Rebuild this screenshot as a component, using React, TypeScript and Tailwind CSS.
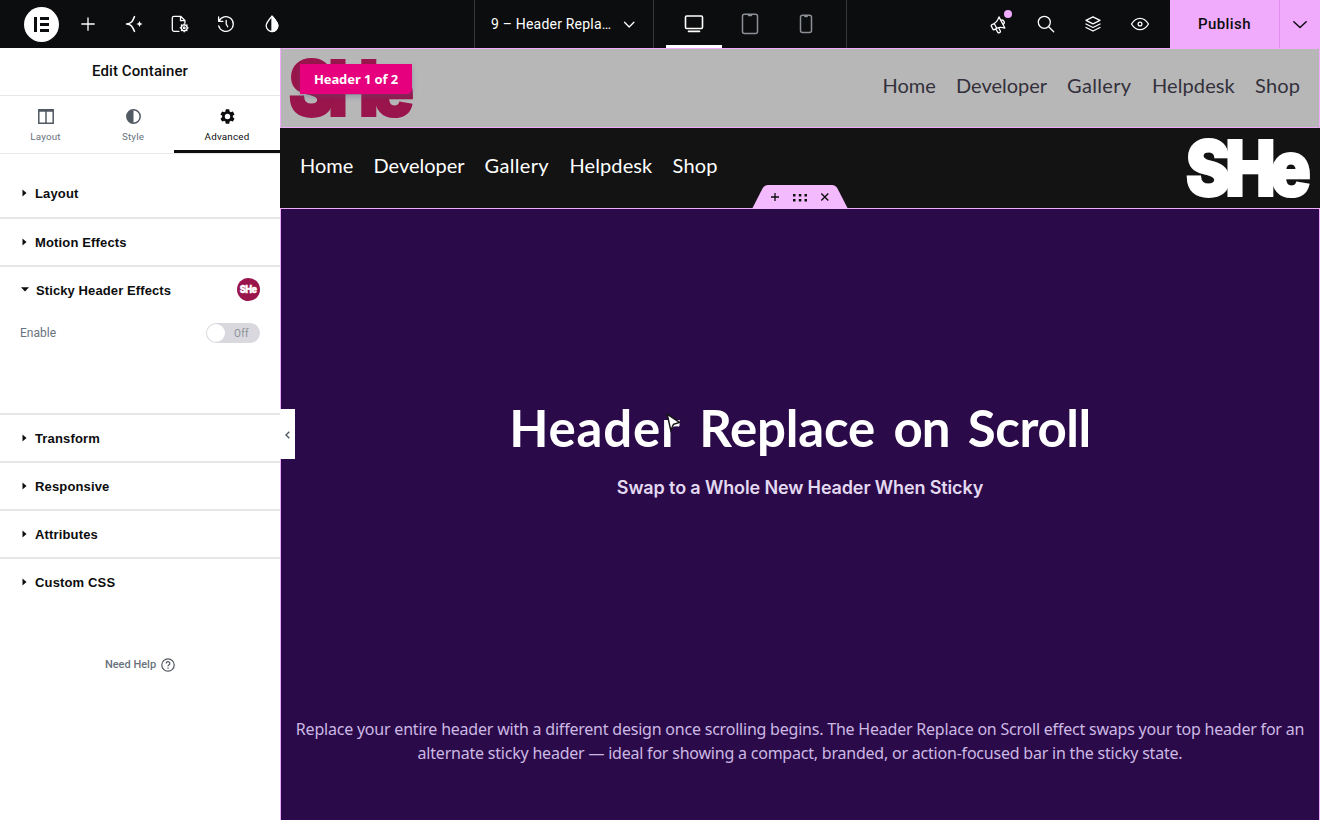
import type { ReactNode } from 'react';

function Icon({ children, size = 24, className = '' }: { children: ReactNode; size?: number; className?: string }) {
  return (
    <svg
      width={size}
      height={size}
      viewBox="0 0 24 24"
      fill="none"
      stroke="currentColor"
      strokeWidth={1.3}
      strokeLinecap="round"
      strokeLinejoin="round"
      className={className}
    >
      {children}
    </svg>
  );
}

function SheLogo({ className = '' }: { className?: string }) {
  return (
    <svg viewBox="0 0 124 62" className={`overflow-visible ${className}`} fill="currentColor" stroke="currentColor">
      <text
        x="-1.200"
        y="59"
        textLength="120"
        lengthAdjust="spacingAndGlyphs"
        fontFamily="Inter, sans-serif"
        fontWeight="900"
        fontSize="77"
        letterSpacing="-6"
        strokeWidth="2"
      >
        SHe
      </text>
    </svg>
  );
}

function TopBar() {
  return (
    <header className="flex h-12 w-full shrink-0 bg-[#0c0d0e] text-white">
      <div className="flex w-[474px] items-center pl-6">
        <div className="flex size-[35px] items-center justify-center rounded-full bg-white">
          <svg width="15" height="15" viewBox="0 0 15 15" fill="#0c0d0e">
            <path d="M0 0h3v15H0zM6 0h9v3H6zM6 6h9v3H6zM6 12h9v3H6z" />
          </svg>
        </div>
        <div className="ml-[6px] flex">
          <div className="flex w-[46px] justify-center">
            <Icon><path d="M12 5.8v12.400M5.800 12h12.400" /></Icon>
          </div>
          <div className="flex w-[46px] justify-center">
            <Icon>
              <path d="M4.500 12c4.800 0 6-2.600 8-7.400M4.500 12c4.800 0 6 2.600 8 7.400" strokeWidth={1.500} />
              <path d="M17.500 9l.9 2.100 2.100.9-2.100.9-.9 2.100-.9-2.100-2.100-.9 2.100-.9z" fill="currentColor" stroke="none" />
            </Icon>
          </div>
          <div className="flex w-[46px] justify-center">
            <Icon>
              <path d="M11 19.300H6a1.700 1.700 0 0 1-1.700-1.700V6A1.700 1.700 0 0 1 6 4.300h6.600l4.300 4.200v2.700M12.500 4.500v4.200h4.200" />
              <circle cx="16.200" cy="15.800" r="3" />
              <circle cx="16.200" cy="15.800" r=".9" />
              <path d="M16.200 11.800v1M16.200 18.800v1M12.200 15.800h1M19.200 15.800h1M13.400 13l.7.7M18.300 17.900l.7.7M19 13l-.7.7M14.100 17.900l-.7.7" />
            </Icon>
          </div>
          <div className="flex w-[46px] justify-center">
            <Icon>
              <path d="M5 9.200a7.400 7.400 0 1 1-.3 4.600M4.600 5v4.300h4.300M12.200 8.300V12l1.500 2.700" />
            </Icon>
          </div>
          <div className="flex w-[46px] justify-center">
            <Icon>
              <path d="M12 4.200c3.500 4 5.800 6.300 5.800 9.500a5.800 5.800 0 0 1-11.600 0c0-3.200 2.300-5.500 5.800-9.500z" />
              <path d="M12 4.200c3.500 4 5.800 6.300 5.800 9.500a5.800 5.800 0 0 1-5.800 5.800z" fill="currentColor" />
            </Icon>
          </div>
        </div>
      </div>

      <div className="flex w-[180px] items-center border-x border-[#35373a] pb-px pl-4 font-[Roboto,sans-serif] text-sm">
        <span className="w-[126px] whitespace-nowrap tracking-[0.200px]">9 – Header Repla…</span>
        <Icon size={24}><path d="M7.500 10.300l4.700 4.700 4.700-4.700" /></Icon>
      </div>

      <div className="flex w-[193px] border-r border-[#35373a] pl-3">
        <div className="flex w-14 items-center justify-center border-b-[3px] border-white pt-[3px]">
          <Icon>
            <rect x="3.500" y="4" width="17" height="12.500" rx="1.200" strokeWidth={1.600} />
            <path d="M6.500 19.400h11" strokeWidth={1.600} />
          </Icon>
        </div>
        <div className="flex w-14 items-center justify-center text-[#8b9096]">
          <Icon>
            <rect x="4.500" y="2.200" width="15" height="19.400" rx="2" strokeWidth={1.500} />
            <path d="M10.500 3.600h3" strokeWidth={1.500} />
          </Icon>
        </div>
        <div className="flex w-14 items-center justify-center text-[#8b9096]">
          <Icon>
            <rect x="6.500" y="3.200" width="11" height="17.400" rx="2" strokeWidth={1.500} />
            <path d="M10.800 4.600h2.400" strokeWidth={1.500} />
          </Icon>
        </div>
      </div>

      <div className="flex flex-1 items-center justify-end pr-[7px]">
        <div className="relative flex w-[47px] justify-center">
          <Icon>
            <g transform="rotate(-28 12 12)">
              <path d="M8 9.300v5.400H5.200a1 1 0 0 1-1-1v-3.400a1 1 0 0 1 1-1zM8 9.300c3 0 5.300-1.600 7.300-3.600v12.600c-2-2-4.300-3.600-7.300-3.600M15.300 9.700a2.300 2.300 0 0 1 0 4.600M7 14.700v3.800a1.300 1.300 0 0 0 1.300 1.300h.6a1 1 0 0 0 1-1v-3.600" />
            </g>
          </Icon>
          <span className="absolute -top-[2px] right-[10px] size-2 rounded-full bg-[#f0abfc]" />
        </div>
        <div className="flex w-[47px] justify-center">
          <Icon><circle cx="10.300" cy="10.300" r="6" /><path d="M14.700 14.700l5 5" /></Icon>
        </div>
        <div className="flex w-[47px] justify-center">
          <Icon>
            <path d="M12 4.800l7 3.500-7 3.500-7-3.500zM5 12l7 3.500 7-3.500M5 15.500l7 3.500 7-3.500" />
          </Icon>
        </div>
        <div className="flex w-[47px] justify-center">
          <Icon>
            <path d="M3.500 12c2.300-3.800 5.100-5.700 8.500-5.700s6.200 1.900 8.500 5.700c-2.300 3.800-5.100 5.700-8.500 5.700S5.800 15.800 3.500 12z" />
            <circle cx="12" cy="12" r="1.900" />
          </Icon>
        </div>
      </div>

      <div className="flex w-[150px] bg-[#f0abfc] font-[Roboto,sans-serif] text-[#0c0d0e]">
        <div className="flex w-[110px] items-center justify-center border-r border-[#e38df2] text-[15px] font-medium tracking-[0.400px]">
          Publish
        </div>
        <div className="flex flex-1 items-center justify-center">
          <Icon className="shrink-0"><path d="M5.800 9.700l6.200 5.800 6.200-5.800" strokeWidth={1.500} /></Icon>
        </div>
      </div>
    </header>
  );
}

function SectionRow({ title, className = 'border-b-2 pt-[2px]' }: { title: string; className?: string }) {
  return (
    <div className={`flex h-12 items-center border-[#e6e6e8] pl-[22px] ${className}`}>
      <svg width="5" height="8" viewBox="0 0 5 8" className="mb-[3px] fill-[#0c0d0e]"><path d="M.5.500l4 3.500-4 3.500z" /></svg>
      <span className="ml-2 text-[13px] font-bold tracking-[0.150px] text-[#0c0d0e]">{title}</span>
    </div>
  );
}

function Panel() {
  return (
    <aside className="flex w-[280px] shrink-0 flex-col bg-white font-[Roboto,sans-serif]">
      <div className="flex h-12 items-center justify-center border-b border-[#e6e8ea] pb-px text-[15px] font-medium tracking-[0.100px] text-[#0c0d0e]">
        Edit Container
      </div>
      <div className="flex h-[58px] border-b border-[#e6e8ea] text-[9.800px] tracking-[0.200px] text-[#69727d]">
        <div className="flex w-[91px] flex-col items-center pt-[13px]">
          <svg width="16" height="15" viewBox="0 0 16 15" fill="none" stroke="#515962" strokeWidth="1.500">
            <path d="M.8.800h14.400v13.400H.8zM8 .8v13.400M.8 2h14.400" />
          </svg>
          <span className="mt-[6px]">Layout</span>
        </div>
        <div className="flex w-[84px] flex-col items-center pt-[13px]">
          <svg width="15" height="15" viewBox="0 0 15 15">
            <circle cx="7.500" cy="7.500" r="6.700" fill="none" stroke="#515962" strokeWidth="1.500" />
            <path d="M7.500 1a6.500 6.500 0 0 0 0 13z" fill="#515962" />
          </svg>
          <span className="mt-[6px]">Style</span>
        </div>
        <div className="-mb-px -ml-px flex h-[57px] w-[106px] flex-col items-center border-b-[3px] border-[#0c0d0e] pt-[13px] text-[#0c0d0e]">
          <svg width="15" height="15" viewBox="3 2 18 20" fill="#0c0d0e">
            <path d="M19.140 12.940c.04-.3.060-.61.060-.94s-.02-.64-.07-.94l2.030-1.580a.49.490 0 0 0 .12-.61l-1.920-3.320a.49.490 0 0 0-.59-.22l-2.390.96a7 7 0 0 0-1.620-.94l-.36-2.540A.48.480 0 0 0 13.920 2.400h-3.840a.48.480 0 0 0-.47.410l-.36 2.540c-.59.240-1.130.570-1.620.940l-2.390-.96a.48.480 0 0 0-.59.220L2.740 8.870a.48.480 0 0 0 .12.610l2.030 1.580a7.500 7.500 0 0 0 0 1.880l-2.030 1.580a.49.490 0 0 0-.12.610l1.920 3.320c.12.220.37.290.59.220l2.390-.96c.5.380 1.030.700 1.620.940l.36 2.540c.05.240.240.410.480.410h3.840c.24 0 .44-.17.470-.41l.36-2.540a7 7 0 0 0 1.620-.94l2.390.96c.22.080.47 0 .59-.22l1.920-3.320a.48.480 0 0 0-.12-.61zM12 15.600a3.600 3.600 0 1 1 0-7.200 3.600 3.600 0 0 1 0 7.200z" />
          </svg>
          <span className="mt-[6px]">Advanced</span>
        </div>
      </div>

      <div className="mt-[17px] font-['Liberation_Sans',sans-serif]">
        <SectionRow title="Layout" className="border-b-2" />
        <SectionRow title="Motion Effects" />
        <div className="h-[148px] border-b-2 border-[#e6e6e8]">
          <div className="flex h-[46px] items-center pr-5 pl-[21px]">
            <svg width="8" height="5" viewBox="0 0 8 5" className="mb-[1px] fill-[#0c0d0e]"><path d="M0 .3h8L4 4.500z" /></svg>
            <span className="ml-[7px] flex-1 pt-[2px] text-[13px] font-bold tracking-[0.100px] text-[#0c0d0e]">Sticky Header Effects</span>
            <span className="mb-px flex size-[23px] items-center justify-center rounded-full bg-[#99154b]">
              <SheLogo className="h-[9px] w-[17px] text-white" />
            </span>
          </div>
          <div className="mt-[10px] flex items-center justify-between px-5 font-[Roboto,sans-serif]">
            <span className="text-xs text-[#69727d]">Enable</span>
            <span className="flex h-5 w-[54px] items-center rounded-full bg-[#d9d8df] text-[10px] text-[#8b8f96]">
              <span className="ml-px size-[18px] rounded-full bg-white" />
              <span className="ml-[9px] tracking-[0.300px]">Off</span>
            </span>
          </div>
        </div>
        <SectionRow title="Transform" />
        <SectionRow title="Responsive" />
        <SectionRow title="Attributes" />
        <SectionRow title="Custom CSS" className="" />
      </div>

      <div className="mt-[50px] flex items-center justify-center text-[11px] font-medium text-[#69727d]">
        Need Help
        <svg width="14" height="14" viewBox="0 0 14 14" fill="none" stroke="#515962" strokeWidth="1.200" className="ml-[5px]">
          <circle cx="7" cy="7" r="6.200" />
          <path d="M5.200 5.500a1.800 1.800 0 1 1 2.700 1.500c-.6.400-.9.600-.9 1.300M7 9.500v1.200" />
        </svg>
      </div>
    </aside>
  );
}

function Nav({ className }: { className: string }) {
  return (
    <nav className={`flex pb-[6px] font-[Lato,sans-serif] text-[20px] whitespace-nowrap ${className}`}>
      <span className="w-[73.500px]">Home</span>
      <span className="w-[111px]">Developer</span>
      <span className="w-[85px] tracking-[0.350px]">Gallery</span>
      <span className="w-[103px] tracking-[0.100px]">Helpdesk</span>
      <span className="w-[47px] tracking-[0.200px]">Shop</span>
    </nav>
  );
}

function Canvas() {
  return (
    <main className="relative flex min-w-0 flex-1 flex-col">
      <div className="relative flex h-20 shrink-0 items-center justify-between border border-[#f0abfc] bg-[#b7b7b7] pr-[17px] pl-[9px]">
        <SheLogo className="h-[62px] w-[124px] text-[#99154b]" />
        <Nav className="text-[#33303b]" />
        <span className="absolute top-[15px] left-[19px] flex h-[30px] w-28 items-center justify-center rounded-br-[5px] bg-[#e6007e] pt-px font-['Noto_Sans',sans-serif] text-[13px] font-bold tracking-[-0.100px] whitespace-nowrap text-white shadow-[0_3px_5px_rgba(80,90,130,0.3)]">
          Header 1 of 2
        </span>
      </div>
      <div className="flex h-20 shrink-0 items-center justify-between bg-[#131313] pr-[9px] pl-5">
        <Nav className="text-white" />
        <SheLogo className="h-[62px] w-[124px] text-white" />
      </div>

      <section className="relative flex flex-1 flex-col items-center border-x border-t border-[#f0abfc] bg-[#2b0a49] text-center">
        <div className="absolute -top-6 left-[471px] h-6 w-24">
          <svg width="96" height="24" viewBox="0 0 96 24">
            <path d="M0 24L10.500 3.500Q12.300 0 16 0h64q3.700 0 5.500 3.500L96 24z" fill="#f3bafd" />
            <path d="M23 8v8M19 12h8M69.300 8.500l7 7M76.300 8.500l-7 7" stroke="#0c0d0e" strokeWidth="1.300" />
            <path d="M41 9h2.500v2.500H41zM46.800 9h2.500v2.500h-2.500zM52.500 9H55v2.500h-2.500zM41 14h2.500v2.500H41zM46.800 14h2.500v2.500h-2.500zM52.500 14H55v2.500h-2.500z" fill="#0c0d0e" />
          </svg>
        </div>
        <h1 className="mt-[187px] font-[Lato,sans-serif] text-[51px] leading-[64px] font-bold whitespace-nowrap text-white [word-spacing:6px]">
          <span className="tracking-[0.800px]">Header</span> <span className="tracking-[-0.200px]">Replace</span>{' '}
          <span className="tracking-[-1px]">on</span> <span className="tracking-[-0.400px]">Scroll</span>
        </h1>
        <p className="mt-[16px] font-[Inter,sans-serif] text-[18px] leading-6 font-semibold tracking-[-0.130px] whitespace-nowrap text-[#e3d9f0]">
          Swap to a Whole New Header When Sticky
        </p>
        <div className="mt-[217px] font-['Noto_Sans',sans-serif] text-[16px] leading-6 tracking-[-0.215px] whitespace-nowrap text-[#cbb9e4]">
          <p>Replace your entire header with a different design once scrolling begins. The Header Replace on Scroll effect swaps your top header for an</p>
          <p>alternate sticky header — ideal for showing a compact, branded, or action-focused bar in the sticky state.</p>
        </div>
        <svg width="15" height="20" viewBox="0 0 15 20" className="absolute top-[204px] left-[385px]">
          <path d="M1.200 1.200l12.300 8.300-6 1.800-2.700 6z" fill="#fff" stroke="#151515" strokeWidth="1.500" />
        </svg>
      </section>

      <button className="absolute top-[361px] left-0 flex h-[50px] w-[15px] items-center justify-center bg-white pt-px text-[#515962]">
        <svg width="5" height="8" viewBox="0 0 5 8" fill="none" stroke="currentColor" strokeWidth="1.400"><path d="M4.300.700L1 4l3.300 3.300" /></svg>
      </button>
    </main>
  );
}

export default function App() {
  return (
    <div className="flex h-[820px] w-[1320px] flex-col overflow-hidden">
      <TopBar />
      <div className="flex min-h-0 flex-1">
        <Panel />
        <Canvas />
      </div>
    </div>
  );
}
